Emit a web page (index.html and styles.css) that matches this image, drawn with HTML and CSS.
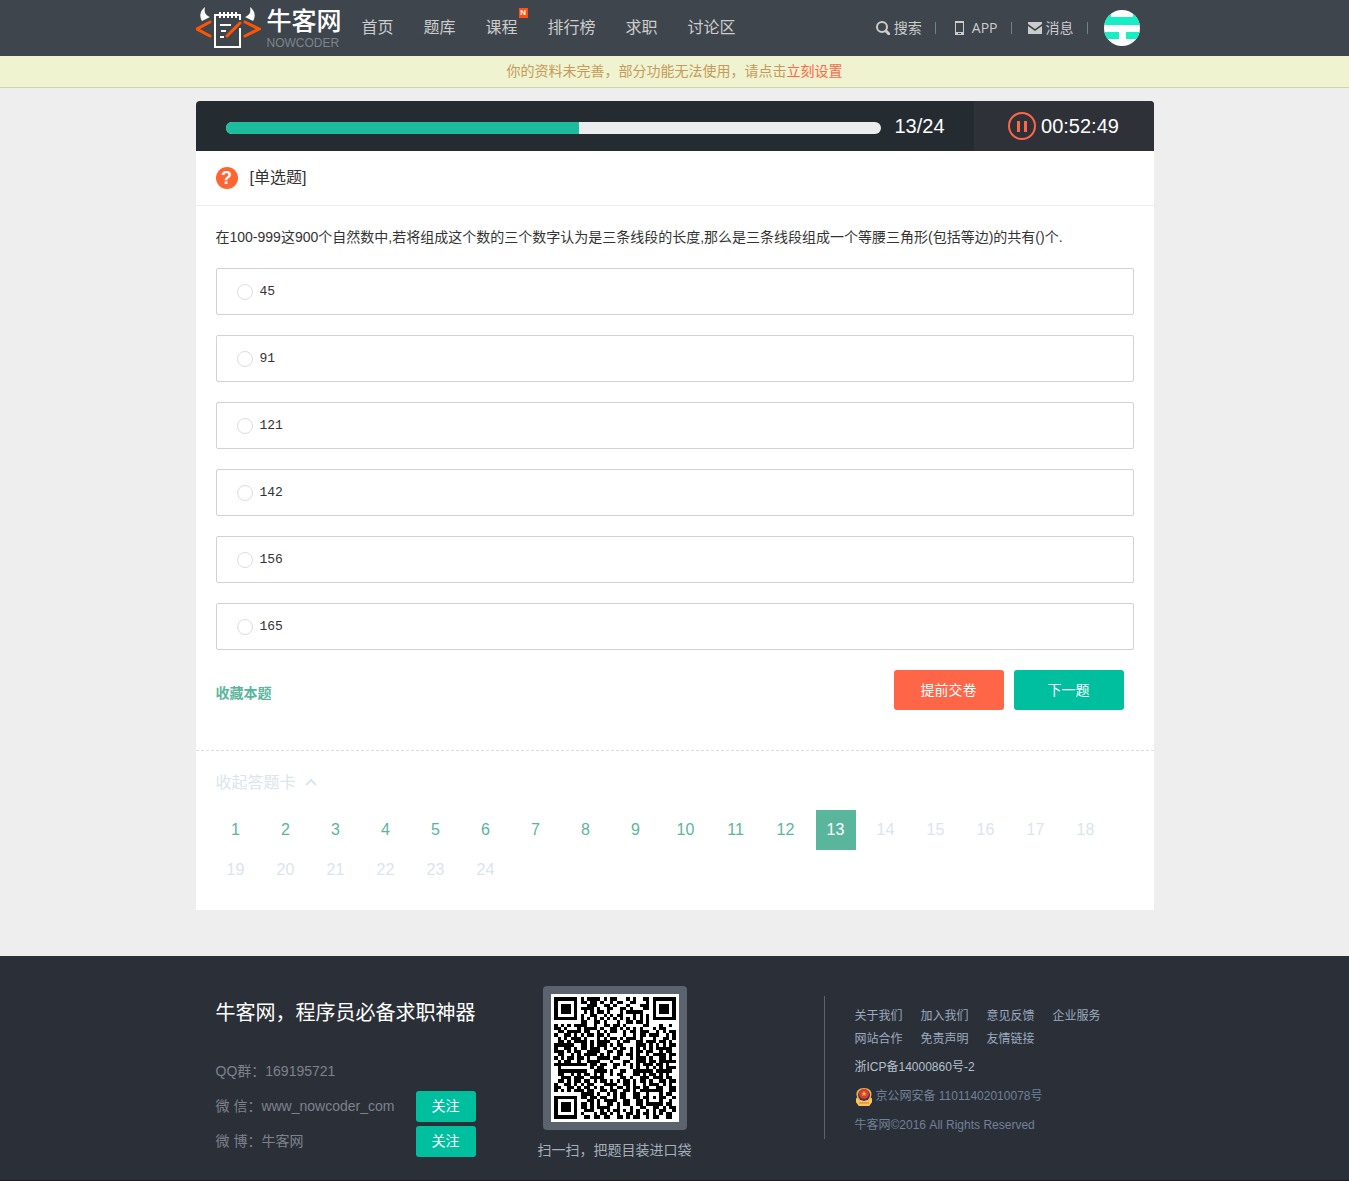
FILE: index.html
```html
<!DOCTYPE html>
<html lang="zh-CN">
<head>
<meta charset="utf-8">
<title>牛客网 - 单选题</title>
<meta name="viewport" content="width=device-width, initial-scale=1">
<link rel="stylesheet" href="styles.css">
</head>
<body>
<header class="site-header">
  <div class="container header-inner">
    <a class="logo" href="#">
      <svg class="logo-mark" viewBox="0 0 65 44" width="65" height="44" aria-hidden="true">
        <g fill="#fff">
          <path d="M9 0C4 4 3 9 6 14l8-4C9 8 8 5 9 0Z"/>
          <path d="M54 0c5 4 6 9 3 14l-8-4c5-2 6-5 5-10Z"/>
        </g>
        <path d="M23 8h-4v32h25V21M44 13V8h-3M23 8h18M24 5v6M28 5v6M32 5v6M36 5v6M40 5v6M24 18h11M25 24h5M24 30h4" fill="none" stroke="#fff" stroke-width="2"/>
        <path d="M14 15 1 22l13 7M49 15l14 7-14 7M31 29l13-13" fill="none" stroke="#ff5500" stroke-width="3" stroke-linecap="round"/>
      </svg>
      <span class="logo-text"><span class="logo-cn">牛客网</span><span class="logo-en">NOWCODER</span></span>
    </a>
    <nav class="main-nav">
      <a href="#">首页</a>
      <a href="#">题库</a>
      <a class="has-badge" href="#">课程<span class="badge">N</span></a>
      <a href="#">排行榜</a>
      <a href="#">求职</a>
      <a href="#">讨论区</a>
    </nav>
    <div class="user-nav">
      <a href="#"><svg width="14" height="14" viewBox="0 0 14 14" aria-hidden="true"><g fill="none" stroke="#ccc"><circle cx="6" cy="6" r="5" stroke-width="2"/><path d="M10 10l3 3" stroke-width="3" stroke-linecap="round"/></g></svg>搜索</a>
      <a href="#"><svg width="16" height="14" viewBox="0 0 16 14" aria-hidden="true"><path fill="#ccc" fill-rule="evenodd" d="M3 0h9v14H3ZM4 2v9h7V2ZM6 12h3v1H6Z"/></svg>APP</a>
      <a href="#"><svg width="14" height="12" viewBox="0 0 14 12" aria-hidden="true"><path fill="#ccc" d="M0 0h14v2L7 7 0 2ZM0 4l7 5 7-5v8H0Z"/></svg>消息</a>
      <a class="avatar" href="#" aria-label="个人主页"><svg width="36" height="36" viewBox="0 0 36 36"><path fill="#fff" d="M0 0h36v36H0Z"/><path fill="#15efc3" d="M0 0h7v7h22V0h7v15H0ZM0 22h15v7H0ZM22 22h14v7H22Z"/></svg></a>
    </div>
  </div>
</header>
<p class="notice">你的资料未完善，部分功能无法使用，请点击<a href="#">立刻设置</a></p>

<main class="container quiz">
  <div class="quiz-bar">
    <div class="progress"><div class="progress-fill" style="width:54%"></div></div>
    <span class="progress-count">13/24</span>
    <div class="timer">
      <button class="pause" type="button" aria-label="暂停"><svg width="28" height="28" viewBox="0 0 28 28"><circle cx="14" cy="14" r="13" fill="none" stroke="#ff6547" stroke-width="2"/><path fill="#ff6547" d="M9 9h3v11H9ZM16 9h3v11h-3Z"/></svg></button>
      <span>00:52:49</span>
    </div>
  </div>
  <h1 class="quiz-type"><span class="question-mark">?</span>[单选题]</h1>
  <form class="question">
    <p class="question-text" id="question">在100-999这900个自然数中,若将组成这个数的三个数字认为是三条线段的长度,那么是三条线段组成一个等腰三角形(包括等边)的共有()个.</p>
    <div class="options" role="radiogroup" aria-labelledby="question">
      <label class="option"><input type="radio" name="answer">45</label>
      <label class="option"><input type="radio" name="answer">91</label>
      <label class="option"><input type="radio" name="answer">121</label>
      <label class="option"><input type="radio" name="answer">142</label>
      <label class="option"><input type="radio" name="answer">156</label>
      <label class="option"><input type="radio" name="answer">165</label>
    </div>
    <div class="actions">
      <a class="favorite" href="#">收藏本题</a>
      <button class="btn btn-submit" type="button">提前交卷</button>
      <button class="btn btn-next" type="button">下一题</button>
    </div>
  </form>
  <section class="answer-card">
    <button class="card-toggle" type="button">收起答题卡<svg width="12" height="8" viewBox="0 0 12 8" aria-hidden="true"><path d="M1 6l5-5 5 5" fill="none" stroke="#dce4ec" stroke-width="2"/></svg></button>
    <div class="numbers">
      <a class="done" href="#">1</a><a class="done" href="#">2</a><a class="done" href="#">3</a><a class="done" href="#">4</a><a class="done" href="#">5</a><a class="done" href="#">6</a><a class="done" href="#">7</a><a class="done" href="#">8</a><a class="done" href="#">9</a><a class="done" href="#">10</a><a class="done" href="#">11</a><a class="done" href="#">12</a><a class="current" href="#">13</a><a href="#">14</a><a href="#">15</a><a href="#">16</a><a href="#">17</a><a href="#">18</a><a href="#">19</a><a href="#">20</a><a href="#">21</a><a href="#">22</a><a href="#">23</a><a href="#">24</a>
    </div>
  </section>
</main>

<footer class="site-footer">
  <div class="container footer-inner">
    <section class="contact">
      <h2>牛客网，程序员必备求职神器</h2>
      <p>QQ群：169195721</p>
      <p>微 信：www_nowcoder_com<button class="follow" type="button">关注</button></p>
      <p>微 博：牛客网<button class="follow" type="button">关注</button></p>
    </section>
    <figure class="qr">
      <div class="qr-frame"><svg class="qr-code" viewBox="-1 -1 39 39" role="img" aria-label="二维码"><path id="qr-modules"/></svg></div>
      <figcaption>扫一扫，把题目装进口袋</figcaption>
    </figure>
    <section class="about">
      <nav class="footer-links">
        <a href="#">关于我们</a><a href="#">加入我们</a><a href="#">意见反馈</a><a href="#">企业服务</a><a href="#">网站合作</a><a href="#">免责声明</a><a href="#">友情链接</a>
      </nav>
      <a class="icp" href="#">浙ICP备14000860号-2</a>
      <p class="legal"><svg width="18" height="20" viewBox="0 0 18 20" aria-hidden="true"><path fill="#e9b55c" d="M2 10C0 4 4 1 9 1s9 3 7 9l1 5-3 4H4l-3-4Z"/><circle cx="9" cy="8" r="6" fill="#35345c"/><circle cx="9" cy="7" r="5" fill="#e53a22"/><path fill="#ffc25a" d="M9 4l1 2h2l-2 1 1 2-2-1-2 1 1-2-2-1h2ZM1 11q8 6 16 0v4l-3 4H4l-3-4Z"/><path stroke="#c7812f" d="M4 16h10" fill="none"/></svg>京公网安备 11011402010078号</p>
      <p class="legal">牛客网©2016 All Rights Reserved</p>
    </section>
  </div>
</footer>
<script src="qr.js"></script>
</body>
</html>
```
FILE: styles.css
```css
* { box-sizing: border-box; }
body {
  margin: 0;
  background: #eee;
  color: #333;
  font: 14px/20px "Liberation Sans", "Noto Sans CJK SC", sans-serif;
}
h1, h2, p, figure { margin: 0; font-weight: normal; }
a { color: inherit; text-decoration: none; }
button { border: 0; padding: 0; background: none; color: inherit; font: inherit; cursor: pointer; }
svg { display: block; flex: none; }
.container { max-width: 958px; margin: 0 auto; }

.site-header { background: #3e454c; color: #ccc; }
.header-inner { display: flex; align-items: center; height: 56px; }
.logo { display: flex; gap: 6px; margin-right: 20px; }
.logo-mark { margin-top: 2px; }
.logo-text { display: flex; flex-direction: column; padding-top: 2px; }
.logo-cn { color: #fff; font-size: 25px; line-height: 28px; font-weight: 500; }
.logo-en { color: #7e848c; font-size: 12px; line-height: 16px; }
.main-nav { display: flex; gap: 30px; font-size: 16px; line-height: 24px; }
.has-badge { position: relative; }
.badge {
  position: absolute; top: -8px; right: -10px;
  width: 9px; height: 10px;
  background: #ff5010; color: #fff;
  font-size: 8px; line-height: 10px; font-weight: bold; text-align: center;
}
.user-nav { display: flex; align-items: center; margin-left: auto; margin-right: 14px; font-family: "Open Sans", "Noto Sans CJK SC", sans-serif; }
.user-nav a { display: flex; align-items: center; gap: 4px; }
.user-nav a:not(.avatar)::after { content: ""; width: 1px; height: 12px; margin: 0 16px 0 9px; background: #6f8388; }
.avatar { border-radius: 50%; overflow: hidden; }

.notice {
  height: 32px; border-bottom: 1px solid #d0d3ac;
  background: #f0f3cf; color: #c49a5a;
  line-height: 31px; text-align: center;
}
.notice a { color: #ff6547; }

.quiz { margin-top: 13px; margin-bottom: 46px; background: #fff; border-radius: 4px 4px 0 0; }
.quiz-bar {
  display: flex; align-items: center; height: 50px; padding-left: 30px;
  border-radius: 4px 4px 0 0; overflow: hidden;
  background: #242c32; color: #fff; font-size: 20px;
}
.progress { flex: 1; height: 12px; margin-top: 4px; border-radius: 6px; overflow: hidden; background: #ebecee; }
.progress-fill { height: 100%; background: #1dbc9c; }
.progress-count { width: 93px; padding-left: 14px; }
.timer { display: flex; align-items: center; justify-content: center; gap: 5px; width: 180px; height: 50px; background: #2e3138; }

.quiz-type {
  display: flex; align-items: center; gap: 12px;
  height: 55px; padding: 0 20px;
  border-bottom: 1px solid #eee; font-size: 16px;
}
.question-mark {
  width: 22px; height: 22px; border-radius: 50%;
  background: #ff6432; color: #fff;
  font: bold 18px/22px "Liberation Sans", sans-serif; text-align: center;
}
.question { padding: 20px 20px 40px; border-bottom: 1px dashed #ddd; }
.question-text { line-height: 22px; margin-bottom: 20px; }
.options { display: grid; gap: 20px; }
.option {
  display: flex; align-items: center; gap: 7px;
  height: 47px; padding: 0 20px;
  border: 1px solid #d0d2d3; border-radius: 2px;
  font: 13px/20px "Liberation Mono", monospace;
}
.option input { appearance: none; width: 16px; height: 16px; margin: 0; border: 1px solid #ddd; border-radius: 50%; background: #fff; }
.option input:checked { border: 5px solid #00bf9f; }
.actions { display: flex; align-items: center; gap: 10px; margin: 20px 10px 0 0; }
.favorite { margin-right: auto; padding-top: 6px; color: #5ab59d; font-weight: bold; }
.btn { width: 110px; height: 40px; border-radius: 3px; color: #fff; }
.btn-submit { background: #ff6547; }
.btn-next { background: #00bf9f; }

.answer-card { padding: 20px; color: #dce4ec; font-size: 16px; }
.card-toggle { display: flex; align-items: center; gap: 9px; line-height: 24px; }
.numbers { display: grid; grid-template-columns: repeat(auto-fill, 40px); column-gap: 10px; margin-top: 15px; }
.numbers a { height: 40px; line-height: 40px; text-align: center; }
.numbers .done { color: #5ab59d; }
.numbers .current { background: #5ab59d; color: #fff; }

.site-footer { background: #2b2f37; border-bottom: 1px solid #1c1f25; }
.footer-inner { display: flex; align-items: flex-start; padding: 30px 20px 20px; }
.contact { width: 260px; color: #7d838d; line-height: 35px; }
.contact h2 { margin: 13px 0 27px; color: #fff; font-size: 20px; line-height: 28px; }
.contact p { display: flex; align-items: center; justify-content: space-between; height: 35px; }
.follow { width: 60px; height: 31px; border-radius: 3px; background: #00bf9f; color: #fff; line-height: 31px; }
.qr { display: flex; flex-direction: column; align-items: center; gap: 10px; margin-left: 62px; color: #a4afbb; }
.qr-frame { padding: 8px; border-radius: 4px; background: #5b646e; }
.qr-code { width: 128px; height: 128px; background: #fff; shape-rendering: crispEdges; }
.about {
  margin: 10px 0 0 132px; padding: 9px 0 2px 30px;
  border-left: 1px solid #5b646e;
  color: #71819a; font-size: 12px; line-height: 23px;
}
.footer-links { display: grid; grid-template-columns: repeat(4, max-content); column-gap: 18px; margin-bottom: 5px; color: #9cabc0; }
.icp { display: block; margin-bottom: 6px; color: #b4c0ce; }
.legal { display: flex; align-items: center; gap: 3px; }
.legal + .legal { margin-top: 6px; }
```
FILE: qr.js
```js
// Rows of the 37 x 37 code; "#" is a dark module.
const rows = [
  "#######.#.####.#.##...#.#..##.#######",
  "#.....#.##.##.#..#.##..##...#.#.....#",
  "#.###.#...###..##.#...#...###.#.###.#",
  "#.###.#.####.#..##..##.#...##.#.###.#",
  "#.###.#..#.#.##.#...#.#####...#.###.#",
  "#.....#.#..##..#.#.##...#.#.#.#.....#",
  "#######.#.#.#.#.#.#.#.#.#.#.#.#######",
  "........##..##.#...#..##.##.#........",
  "#.#.#.####..#..##.##.#.....##...#..#.",
  "##.#...#.####.#..##.#.#.#.#...#.##...",
  ".##.####.##..#.#.##..#.##.###..#.#.##",
  "#..##.#.#.##.##.#....#..#.##.###..#.#",
  ".#.#.###.#...#.#.##.#.###.#...#..##.#",
  ".##.#.####.#.####..#.##..##.###.##.#.",
  "######..##.#.###.#.##....###.#.#.#.##",
  "#..##.#.##.###.#..#.##.#.#.#.#.#####.",
  "###.#.##..####..##.##..#.##.##..#.##.",
  ".##..#.#.####.#.#..##.##.#..#.####.##",
  "#.#.##.##.#..####.##...#.###.#..##.#.",
  ".#.##..#..####...#...##..###.##.#####",
  "##########.##.##..##.#.#.#.###.##.#..",
  ".#.........#.##...#....#.#..#.#.#.###",
  ".#########..####.#..##..######.#####.",
  ".##..#.#.##.#.#..#.##...##.#.##.#.#..",
  "..###.###..####.....##.#..###.###.##.",
  ".##.#.##.##.#.##.#.#.##.#.##.#..##.##",
  "#..##.#.#.##...####..##.#..#.###.#.#.",
  "##..##.#.##.#.#..#.##.#.##.##..##..##",
  "#.#.#.###.##..##.##..##.#.#######..##",
  "........####.#..#.#.##..##..#...#.##.",
  "#######.##.##.##..#.##..##.##.#.##..#",
  "#.....#...##.#.####..##..##.#...#..#.",
  "#.###.#.##.#.#..##.#.##..##.#####.##.",
  "#.###.#.##.#.####..#...#..##..##.#.##",
  "#.###.#..###..#.#.##.#.#.#..#.#.##..#",
  "#.....#.#...#.##.#.#..##.#.##.#.#.##.",
  "#######..##.##.##..##.#.##..#.##..##."
];
let d = "";
rows.forEach((row, y) => {
  for (const run of row.matchAll(/#+/g)) {
    d += `M${run.index} ${y}h${run[0].length}v1h-${run[0].length}Z`;
  }
});
document.getElementById("qr-modules").setAttribute("d", d);
```
